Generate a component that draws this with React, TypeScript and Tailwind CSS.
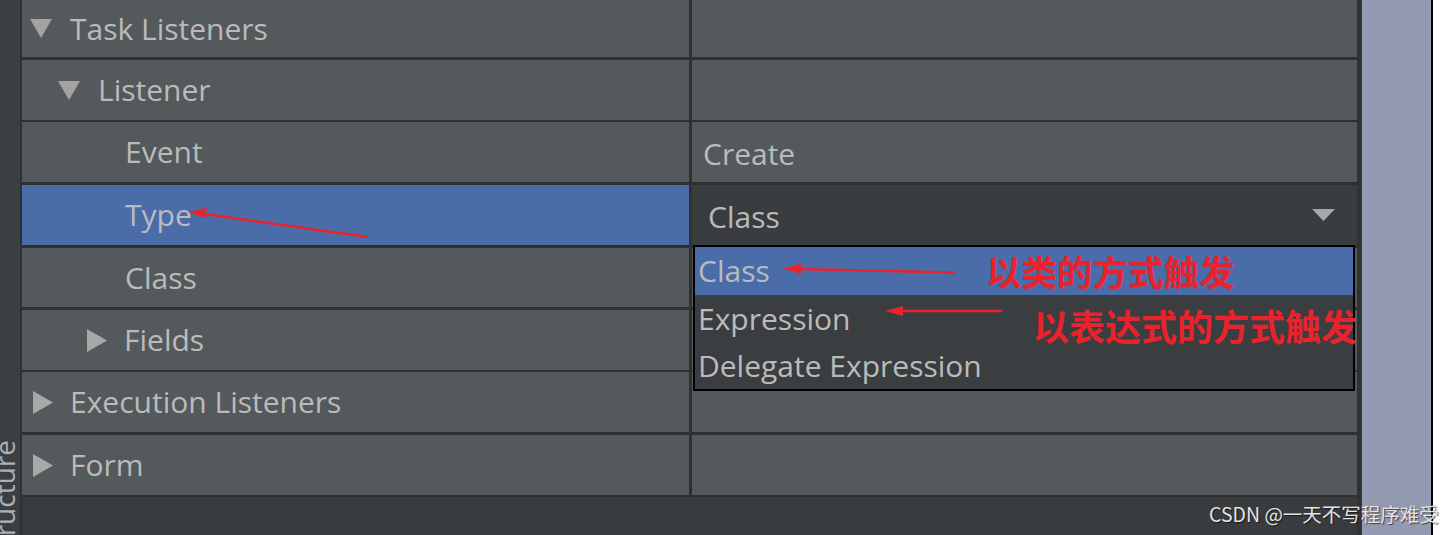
import React from 'react';

// Property sheet rows (left label column + right value column)
type Row = {
  label: string;
  arrow?: 'down' | 'right';
  pad: string;
  h: string;
  border: string;
  value?: string;
  selected?: boolean;
  combo?: boolean;
};

const ROWS: Row[] = [
  { label: 'Task Listeners', arrow: 'down', pad: 'pl-[8px]', h: 'h-[57px]', border: 'mb-[3px]' },
  { label: 'Listener', arrow: 'down', pad: 'pl-[36px]', h: 'h-[60px]', border: 'mb-[2px]' },
  { label: 'Event', pad: 'pl-[103px]', h: 'h-[60px]', border: 'mb-[3px]', value: 'Create' },
  { label: 'Type', pad: 'pl-[103px]', h: 'h-[60px]', border: 'mb-[3px]', selected: true, combo: true },
  { label: 'Class', pad: 'pl-[103px]', h: 'h-[59px]', border: 'mb-[3px]' },
  { label: 'Fields', arrow: 'right', pad: 'pl-[65px]', h: 'h-[60px]', border: 'mb-[2px]' },
  { label: 'Execution Listeners', arrow: 'right', pad: 'pl-[11px]', h: 'h-[60px]', border: 'mb-[3px]' },
  { label: 'Form', arrow: 'right', pad: 'pl-[11px]', h: 'h-[60px]', border: 'mb-[2px]' },
];

const OPTIONS = [
  { label: 'Class', h: 'h-[48px]', active: true },
  { label: 'Expression', h: 'h-[47px]' },
  { label: 'Delegate Expression', h: 'h-[47px]' },
];

function Tri({ dir }: { dir: 'down' | 'right' }) {
  if (dir === 'down') {
    return (
      <svg width="22" height="19" viewBox="0 0 22 19" className="shrink-0 mr-[18px]">
        <polygon points="0,0 22,0 11,19" fill="#a3a3a3" />
      </svg>
    );
  }
  return (
    <svg width="20" height="23" viewBox="0 0 20 23" className="shrink-0 mr-[17px]">
      <polygon points="0,0 20,11.5 0,23" fill="#a8a8a8" />
    </svg>
  );
}

function Dropdown() {
  return (
    <div className="absolute top-full left-[1px] w-[662px] z-10 border-2 border-black bg-[#3b3e41]">
      {OPTIONS.map((o) => (
        <div
          key={o.label}
          className={`${o.h} flex items-center pl-[3px] ${o.active ? 'bg-[#4a6daa]' : ''}`}
        >
          {o.label}
        </div>
      ))}
    </div>
  );
}

export default function App() {
  return (
    <div
      className="relative w-[1456px] h-[535px] flex bg-white overflow-hidden text-[30px] leading-none text-[#bbbbbb]"
      style={{ fontFamily: '"Open Sans", "Noto Sans", sans-serif' }}
    >
      {/* collapsed tool window strip */}
      <div className="relative w-[20px] h-full bg-[#3c3f41] overflow-hidden">
        <span className="absolute top-[440px] left-[-10px] text-[28px] text-[#aab0b4] [writing-mode:vertical-rl] rotate-180 whitespace-nowrap">
          Structure
        </span>
      </div>
      <div className="w-[2px] h-full bg-[#2f3133]" />

      {/* property table */}
      <div className="w-[1335px] h-full flex flex-col bg-[#2e3032]">
        {ROWS.map((r) => (
          <div key={r.label} className={`flex ${r.h} ${r.border} shrink-0`}>
            <div
              className={`w-[667px] flex items-center ${r.pad} ${r.selected ? 'bg-[#4a6daa]' : 'bg-[#54595c]'}`}
            >
              {r.arrow && <Tri dir={r.arrow} />}
              <span>{r.label}</span>
            </div>
            <div className="w-[3px]" />
            {r.combo ? (
              <div className="relative flex-1 flex items-center justify-between pl-[16px] pr-[22px] bg-[#3a3d40]">
                <span className="pt-[4px]">Class</span>
                <svg width="23" height="12" viewBox="0 0 23 12">
                  <polygon points="0,0 23,0 11.5,12" fill="#a8a8a8" />
                </svg>
                <Dropdown />
              </div>
            ) : (
              <div className="flex-1 flex items-center pl-[11px] pt-[4px] bg-[#54595c]">
                {r.value}
              </div>
            )}
          </div>
        ))}
        <div className="flex-1 bg-[#393c3f]" />
      </div>

      <div className="w-[4px] h-full bg-[#303234]" />
      <div className="w-[1px] h-full bg-[#3b3d3f]" />
      <div className="w-[69px] h-full bg-[#9399b0]" />
      <div className="w-[2px] h-full bg-black" />
      <div className="flex-1 h-full bg-white" />

      {/* red annotations */}
      <svg className="absolute inset-0 z-20 pointer-events-none" width="1456" height="535">
        <g stroke="#e8232b" strokeWidth="2.5" fill="#e8232b">
          <line x1="368" y1="237" x2="200" y2="213.5" />
          <polygon points="188,212 207,208 205,218" stroke="none" />
          <line x1="955" y1="272.5" x2="795" y2="269" />
          <polygon points="783,268.5 801,263.5 801,274" stroke="none" />
          <line x1="1002" y1="311" x2="897" y2="311" />
          <polygon points="885,311 903,306 903,316" stroke="none" />
        </g>
      </svg>
      <div
        className="absolute z-20 left-[986px] top-[253px] text-[35.5px] font-bold text-[#e8232b] leading-none whitespace-nowrap"
        style={{ fontFamily: '"Noto Sans CJK SC", sans-serif' }}
      >
        以类的方式触发
      </div>
      <div
        className="absolute z-20 left-[1033px] top-[307px] text-[36px] font-bold text-[#e8232b] leading-none whitespace-nowrap"
        style={{ fontFamily: '"Noto Sans CJK SC", sans-serif' }}
      >
        以表达式的方式触发
      </div>

      {/* watermark */}
      <div
        className="absolute z-20 left-[1209px] top-[504px] text-[19.5px] leading-none text-[#e4e4e4] whitespace-nowrap [text-shadow:1px_1px_1px_rgba(0,0,0,0.6)]"
        style={{ fontFamily: '"Noto Sans CJK SC", sans-serif' }}
      >
        CSDN @一天不写程序难受
      </div>
    </div>
  );
}
